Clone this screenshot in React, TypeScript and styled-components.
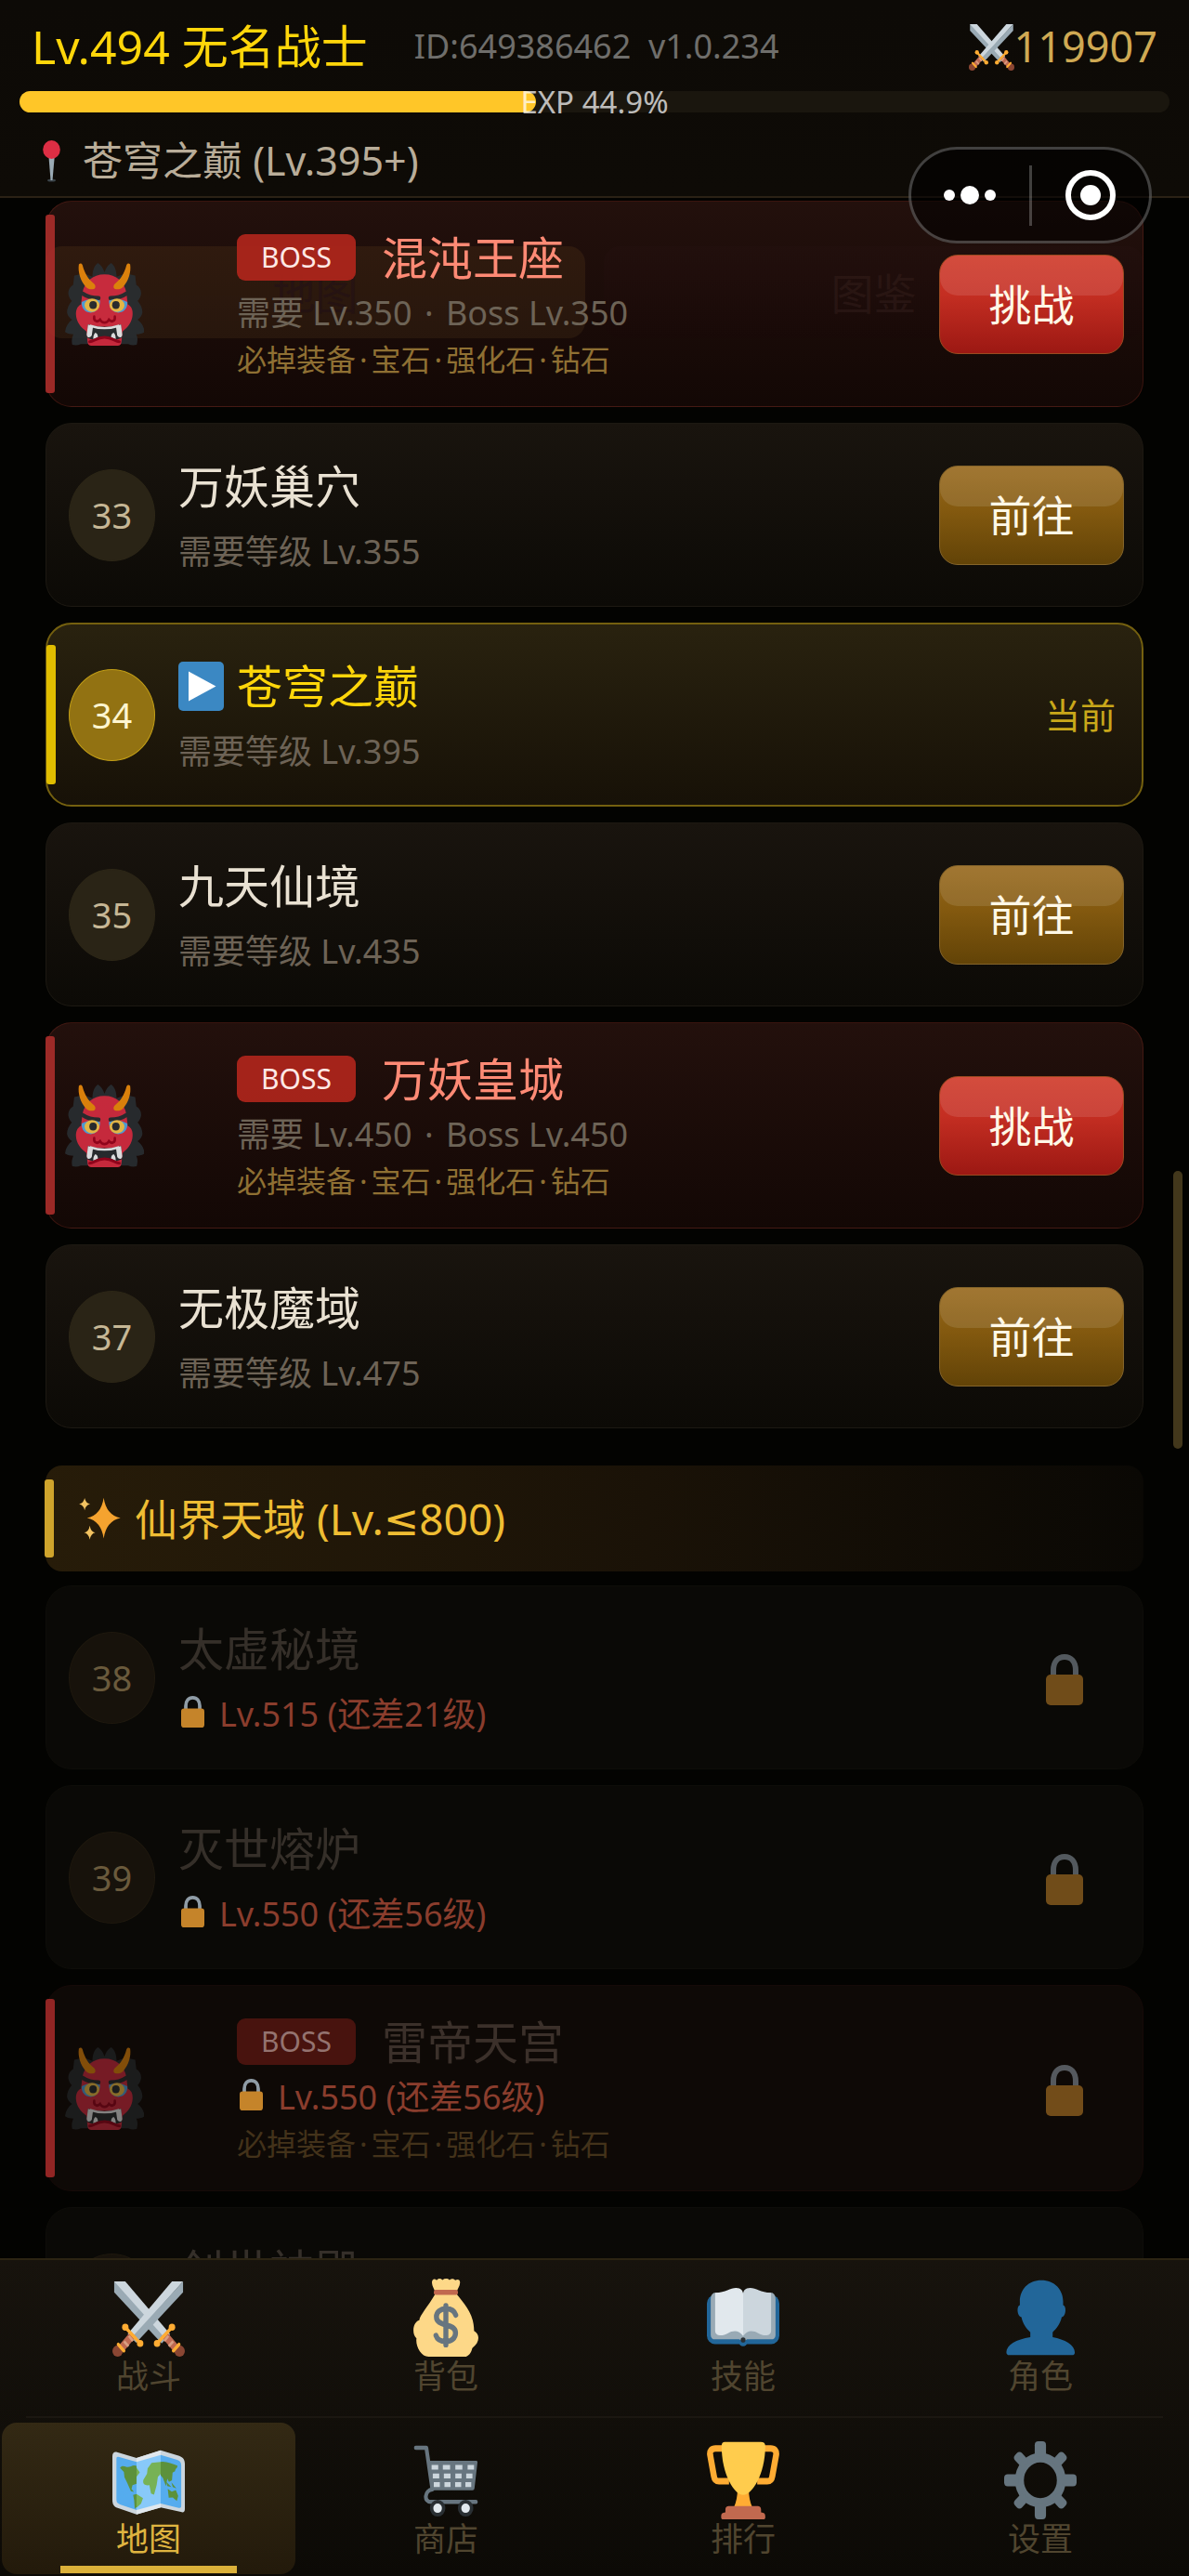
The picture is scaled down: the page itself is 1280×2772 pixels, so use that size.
import React from "react";
import styled, { createGlobalStyle, css } from "styled-components";

const GlobalStyle = createGlobalStyle`
  *, *::before, *::after { box-sizing: border-box; }
  body {
    margin: 0;
    background: #030301;
    font-family: "Noto Sans", "DejaVu Sans", "Noto Sans CJK SC", sans-serif;
  }
  button { font-family: inherit; cursor: pointer; }
  h1, h2, h3, p, ul { margin: 0; padding: 0; font-weight: 400; }
  ul { list-style: none; }
`;

/* ---------- layout ---------- */

const Screen = styled.div`
  position: relative;
  display: flex;
  flex-direction: column;
  height: 100vh;
  overflow: hidden;
`;

const Header = styled.header`
  padding: 20px 21px 8px;
  background: linear-gradient(#0d0a06, #0e0b06);
  border-bottom: 2px solid #2b2115;
`;

const PlayerRow = styled.div`
  display: flex;
  align-items: center;
  height: 60px;
  padding: 0 13px;
`;

const PlayerName = styled.h1`
  font-size: 50px;
  line-height: 60px;
  color: #ffd60a;
`;

const PlayerMeta = styled.p`
  flex: 1;
  padding-left: 50px;
  font-size: 36px;
  line-height: 60px;
  color: #6f6e6b;
  white-space: pre;
`;

const Power = styled.div`
  display: flex;
  align-items: center;
  font-size: 45px;
  line-height: 60px;
  color: #cfa953;
`;

const ExpTrack = styled.div`
  position: relative;
  height: 23px;
  margin-top: 18px;
  border-radius: 12px;
  background: #1a160e;
`;

const ExpFill = styled.div`
  height: 100%;
  border-radius: 12px;
  background: #ffc628;
`;

const ExpLabel = styled.span`
  position: absolute;
  inset: 0;
  display: flex;
  align-items: center;
  justify-content: center;
  font-size: 33px;
  color: rgba(255, 255, 255, 0.72);
`;

const Location = styled.div`
  display: flex;
  align-items: center;
  gap: 24px;
  height: 60px;
  margin-top: 22px;
  padding-left: 25px;
  font-size: 43px;
  line-height: 60px;
  color: #b9ad99;
`;

const Capsule = styled.div`
  position: absolute;
  top: 158px;
  right: 40px;
  z-index: 3;
  display: flex;
  align-items: center;
  width: 262px;
  height: 104px;
  border: 3px solid rgba(255, 255, 255, 0.24);
  border-radius: 52px;
  background: rgba(0, 0, 0, 0.55);
`;

const CapsuleButton = styled.button`
  display: flex;
  flex: 1;
  align-items: center;
  justify-content: center;
  height: 100%;
  padding: 0;
  border: 0;
  background: none;
`;

const CapsuleDivider = styled.span`
  width: 3px;
  height: 65px;
  background: rgba(255, 255, 255, 0.24);
`;

const ListArea = styled.main`
  position: relative;
  flex: 1;
  min-height: 0;
  overflow: hidden;
  padding: 3px 49px 0;
`;

const ScrollThumb = styled.span`
  position: absolute;
  top: 1047px;
  right: 7px;
  width: 10px;
  height: 299px;
  border-radius: 5px;
  background: #42371b;
`;

const SubTabs = styled.div`
  position: absolute;
  top: 52px;
  left: 49px;
  right: 49px;
  display: flex;
  gap: 20px;
`;

const SubTab = styled.button<{ $on?: boolean }>`
  flex: 1;
  height: 99px;
  padding: 0 0 4px;
  border: 0;
  border-radius: 18px;
  font-size: 46px;
  background: ${(p) => (p.$on ? "linear-gradient(#161106, #151106)" : "linear-gradient(#060403, #030201)")};
  color: ${(p) => (p.$on ? "#0f0b0b" : "#130e0c")};
`;

/* ---------- cards ---------- */

const Stages = styled.ul`
  position: relative;
  display: flex;
  flex-direction: column;
  gap: 17px;
`;

type Tone = "open" | "current" | "boss";

const tones = {
  open: css`
    height: 198px;
    border: 1px solid #1d1912;
    background: linear-gradient(#19140e, #0c0a06);
  `,
  current: css`
    height: 198px;
    border: 2px solid #74600f;
    background: linear-gradient(#29220f, #171107);
  `,
  boss: css`
    height: 222px;
    border: 1px solid rgba(150, 50, 38, 0.3);
    background: linear-gradient(rgba(175, 75, 65, 0.19), rgba(120, 40, 35, 0.14));
  `,
};

const Card = styled.li<{ $tone: Tone; $locked?: boolean }>`
  position: relative;
  display: flex;
  flex-shrink: 0;
  align-items: center;
  padding: 0 20px 0 ${(p) => (p.$tone === "current" ? 23 : 24)}px;
  border-radius: 28px;
  ${(p) => tones[p.$tone]}
  ${(p) =>
    p.$locked &&
    css`
      border-color: ${p.$tone === "boss" ? "#160a08" : "#0e0d09"};
      background: ${p.$tone === "boss" ? "#0e0906" : "#0a0906"};
    `}
`;

const Accent = styled.span<{ $color: string; $inset: number }>`
  position: absolute;
  top: ${(p) => p.$inset}px;
  bottom: ${(p) => p.$inset}px;
  left: -1px;
  width: 10px;
  border-radius: 3px;
  background: ${(p) => p.$color};
`;

const Badge = styled.span<{ $current?: boolean; $locked?: boolean }>`
  display: flex;
  flex-shrink: 0;
  align-items: center;
  justify-content: center;
  width: 93px;
  height: 99px;
  border: 1px solid ${(p) => (p.$current ? "#c19d16" : p.$locked ? "#1e180e" : "#2c2617")};
  border-radius: 50%;
  font-size: 38px;
  background: ${(p) => (p.$current ? "#927212" : p.$locked ? "#17120b" : "#2a2416")};
  color: ${(p) => (p.$current ? "#fff6d0" : p.$locked ? "#6a5a3c" : "#c6b795")};
`;

const BossFace = styled.span<{ $locked?: boolean }>`
  display: flex;
  flex-shrink: 0;
  width: 185px;
  margin-left: -4px;
  opacity: ${(p) => (p.$locked ? 0.5 : 0.88)};
`;

const Info = styled.div<{ $boss?: boolean }>`
  flex: 1;
  min-width: 0;
  padding-top: 4px;
  padding-left: ${(p) => (p.$boss ? 0 : 25)}px;
`;

const Title = styled.h2<{ $color: string; $boss?: boolean }>`
  display: flex;
  align-items: center;
  gap: ${(p) => (p.$boss ? 28 : 14)}px;
  height: ${(p) => (p.$boss ? 62 : 70)}px;
  font-size: 49px;
  line-height: 62px;
  color: ${(p) => p.$color};
`;

const BossTag = styled.span<{ $locked?: boolean }>`
  width: 128px;
  border-radius: 9px;
  font-size: 30px;
  line-height: 50px;
  text-align: center;
  background: ${(p) => (p.$locked ? "#48130e" : "rgba(178, 38, 28, 0.9)")};
  color: ${(p) => (p.$locked ? "#947370" : "#ffe9e6")};
`;

const Note = styled.p<{ $locked?: boolean; $boss?: boolean }>`
  display: flex;
  align-items: center;
  gap: 16px;
  height: ${(p) => (p.$boss ? 52 : 66)}px;
  padding-left: ${(p) => (p.$locked ? 3 : 0)}px;
  font-size: 36px;
  color: ${(p) => (p.$locked ? "#8a3d2d" : "#6d6356")};
`;

const Drops = styled.p<{ $locked?: boolean }>`
  margin-top: 2px;
  font-size: 32px;
  line-height: 50px;
  color: ${(p) => (p.$locked ? "#43321a" : "#8f7033")};
`;

const Dot = styled.span`
  padding: 0 4px;
`;

const GoButton = styled.button<{ $danger?: boolean }>`
  position: relative;
  flex-shrink: 0;
  width: 199px;
  height: 107px;
  padding: 0 0 4px;
  border: 1px solid ${(p) => (p.$danger ? "#9a4a20" : "#84642a")};
  border-radius: 20px;
  font-size: 46px;
  color: #fff8e6;
  background: ${(p) =>
    p.$danger ? "linear-gradient(#cf3626, #c42e22 40%, #9c1813)" : "linear-gradient(#966619, #83590f 45%, #624307)"};

  &::before {
    content: "";
    position: absolute;
    inset: 0 0 auto;
    height: 43px;
    border-radius: 19px;
    background: rgba(255, 255, 255, 0.11);
  }
`;

const CurrentTag = styled.span`
  padding: 0 8px 4px 0;
  font-size: 38px;
  color: #c9a71a;
`;

const LockSlot = styled.span`
  display: flex;
  padding: 4px 44px 0 0;
  opacity: 0.55;
`;

const Realm = styled.li`
  position: relative;
  display: flex;
  flex-shrink: 0;
  align-items: center;
  gap: 15px;
  height: 114px;
  margin: 23px 0 -2px;
  padding-left: 36px;
  border-radius: 18px;
  background: linear-gradient(90deg, #271c09, #1a1207 55%, #0a0804);
`;

const RealmTitle = styled.h3`
  font-size: 46px;
  line-height: 60px;
  color: #efbd33;
`;

/* ---------- bottom navigation ---------- */

const Nav = styled.nav`
  display: flex;
  flex-direction: column;
  border-top: 2px solid #2c2413;
  padding-bottom: 2px;
  background: linear-gradient(#17130d, #0c0a06);
`;

const NavRow = styled.div`
  display: grid;
  grid-template-columns: repeat(4, 1fr);
`;

const NavRule = styled.hr`
  height: 2px;
  margin: 5px 28px;
  border: 0;
  background: #1b1711;
`;

const NavItem = styled.button<{ $on?: boolean }>`
  position: relative;
  display: flex;
  flex-direction: column;
  align-items: center;
  height: 163px;
  margin: 0 2px;
  padding: 20px 0 0;
  border: 0;
  border-radius: 16px;
  font-size: 35px;
  line-height: 42px;
  background: ${(p) => (p.$on ? "linear-gradient(#332914, #231a0b)" : "none")};
  color: ${(p) => (p.$on ? "#dfb440" : "#50452f")};

  &::after {
    content: "";
    position: absolute;
    bottom: 1px;
    left: 20%;
    right: 20%;
    height: 8px;
    background: ${(p) => (p.$on ? "#dcb13a" : "transparent")};
  }
`;

/* ---------- drawings ---------- */

type Box = { w: number; h: number; children: React.ReactNode; box?: string };

const Pic = ({ w, h, children, box = "0 0 36 36" }: Box) => (
  <svg width={w} height={h} viewBox={box} preserveAspectRatio="none" aria-hidden="true">
    {children}
  </svg>
);

const SwordHilt = () => (
  <g strokeLinecap="round">
    <path d="M4 32.6 10.4 25.6" stroke="#BF6952" strokeWidth="3.6" strokeLinecap="butt" />
    <path d="M5.8 28.9 8 31.2M8.2 26.4 10.2 28.8" stroke="#D99E82" strokeWidth="1.2" strokeLinecap="butt" />
    <ellipse cx="2.6" cy="33.4" rx="2.6" ry="2.6" fill="#8A4633" />
    <path d="M2.9 30.3 5.7 33.3" stroke="#FFAC33" strokeWidth="1.5" />
    <path d="M6.4 22.4 13.8 29.9" stroke="#FFAC33" strokeWidth="1.6" />
    <circle cx="6.4" cy="22.4" r="1.6" fill="#FFAC33" />
    <circle cx="13.8" cy="29.9" r="1.6" fill="#FFAC33" />
  </g>
);

const Swords = ({ w = 78, h = 84 }) => (
  <Pic w={w} h={h}>
    <path fill="#9AAAB4" d="M.9 1.3h2.6l25 24.6-4 4L.9 6.3z" />
    <path fill="#CCD6DD" d="M.9 1.3h5.5L28.6 25.5l-2.2 2.2z" />
    <path fill="#CCD6DD" d="M35.1 1.3h-5.5L7.6 25.5l2.2 2.2z" />
    <path fill="#9AAAB4" d="M35.1 1.3v5L11.8 29.6l-2.4-2.3z" />
    <SwordHilt />
    <g transform="matrix(-1 0 0 1 36 0)">
      <SwordHilt />
    </g>
  </Pic>
);

const MoneyBag = () => (
  <Pic w={78} h={84}>
    <path
      fill="#FDD888"
      d="M12.8 7C9 13 5 17 4.8 19.2 1.6 20 .9 25.5 3.4 27.5 2.8 31 5.6 36 9.4 36h17.9c2 0 3.4-2 3.8-4C35 29.500 35 25.500 32 24.100 32 16 27 11.500 23.200 7z"
    />
    <path
      fill="#FDD888"
      d="M11.100 2c-.2-1.800 1.400-2.300 2.300-1.200.8-1 2-1 2.900-.2 1.100-.8 2.500-.8 3.500 0 1-.8 2.200-.7 2.900.2 1.200-.9 2.500-.3 2.300 1.200-.1 1.500-1.100 2.500-1.400 3.500H12.400c-.3-1-1.200-2-1.300-3.500z"
    />
    <rect x="12" y="5.100" width="12" height="2.400" rx="1" fill="#C1694F" />
    <path
      d="M18 12.500v18M22.900 16.800c-.6-2-2.600-2.900-4.900-2.900-2.600 0-4.700 1.400-4.700 3.700 0 5 9.500 2.500 9.500 7.500 0 2.400-2.200 3.900-4.800 3.900-2.400 0-4.300-1-4.900-2.700"
      fill="none"
      stroke="#67757F"
      strokeWidth="2.500"
      strokeLinecap="round"
    />
  </Pic>
);

const Book = () => (
  <Pic w={78} h={84}>
    <rect x="0" y="7.500" width="36" height="22.700" rx="4" fill="#226699" />
    <circle cx="18" cy="29" r="2.200" fill="#226699" />
    <path fill="#99AAB5" d="M3.500 6.500h29c1.200.6 1.600 1.500 1.600 3V26c0 1.400-.9 2-2 2H20l-2 1-2-1H4c-1.200 0-2.100-.6-2.100-2V9.500c0-1.500.4-2.400 1.600-3z" />
    <circle cx="18" cy="28.300" r="1.200" fill="#292F33" />
    <path fill="#E1E8ED" d="M4.100 6.500C9.500 6.500 11.500 4.300 14.500 4.300 17 4.300 18 5.500 18 7.500V26.500C16 23.600 13 23.800 10.500 25.200 7.500 26.800 4.100 26.500 4.100 24z" />
    <path fill="#CCD6DD" d="M31.900 6.500c-5.400 0-7.400-2.200-10.400-2.200-2.500 0-3.500 1.200-3.500 3.200v19c2-2.900 5-2.700 7.500-1.300 3 1.600 6.400 1.300 6.400-1.200z" />
  </Pic>
);

const Person = () => (
  <Pic w={78} h={84}>
    <path
      fill="#226699"
      d="M18.500.7C12 .7 7.800 5 7.800 10.500v1.700c-1.700.4-1.500 5.300.8 5.600.7 3.200 2.400 5.200 4.400 6.900V27C6 28 1.100 30.500 1.100 34q0 1.200.8 1.200h32.300q.9 0 .9-1.200c0-3.500-5-6-11-7v-2.300c2-1.700 3.700-3.700 4.500-6.900 2.200-.4 2.500-5.200.7-5.600v-1.700C29.300 5 25 .7 18.500.7z"
    />
  </Pic>
);

const WorldMap = () => (
  <Pic w={78} h={84}>
    <path
      fill="#CCD6DD"
      d="M2.300 5 12 7.700 24 4.200l9.200 2.500C35.200 7.400 36 8.500 36 10.500v20.800c0 1.300-.7 1.700-2 1.300L24 30.500l-12 3.300-9.400-3C.6 30.100 0 29 0 27V7c0-1.500.8-2.300 2.300-2z"
    />
    <path fill="#E1E8ED" d="m12 7.700 12-3.500v26.300l-12 3.300z" />
    <path fill="#55ACEE" d="M3 7.200 12 9.500v22.200l-8.300-2.600C2.300 28.600 2 28 2 26.500V8q0-1.100 1-.8zM24 6.300l8.200 2.300c1.500.5 2 1.300 2 2.700v18.400c0 1-.4 1.200-1.300 1L24 28.700z" />
    <path fill="#88C9F9" d="m12 9.500 12-3.200v22.400l-12 3z" />
    <path
      fill="#5C913B"
      d="M3.800 12.300c.8-1.200 2-.8 3-.5 2 .6 3.200-1.300 5.200-.4v8.200l-2 .6-.5 1.800 1.200 1.400-1.500-.4-1.800-3.700-1.400-2.700-.3-2.500zM10.300 24.800l1.700-.5v6l-.9.900-.3-4zM24 9.500c3-.3 5.500.8 8.300 1.800.2 1-1 1.300-1.200 2.500l-1.200.7-.3 3.500-1.500.8-.8-1.600-.7 3.500-1.500-3.800L24 15.800zM27.500 22l2 1.300 2-.8 1.200 2.700-.7 2.300-2-1.600-2 .1zM26.800 18.800l2.500 2.300-2-.4zM29.300 19l2.500 2.800-1.800-.7z"
    />
    <path
      fill="#77B255"
      d="m12 12.200 1.600 2.200-1.600 2zM12 24.300l3.200 2-1 2.500-2.200 1.800zM24 9.500v5.600l-1.400 1.300-.6 3.700-1.300 4.500-1.500-.5-.8-3.800c-2.300.3-3.500-.6-3-2.500l1.800-2.800.3-2.500 2-2.500z"
    />
  </Pic>
);

const Cart = () => (
  <Pic w={78} h={84}>
    <path
      fill="none"
      stroke="#67757F"
      strokeWidth="1.900"
      strokeLinecap="round"
      strokeLinejoin="round"
      d="M3.100 3h5.200l3 19.200c-3.800.4-4.600 5.800-.6 5.800h22.200"
    />
    <path fill="#67757F" d="M9.300 9.600c0-.4.300-.6.700-.6h23q.8 0 .7.800l-1.500 12q-.1.800-1 .8H11.400z" />
    <path
      stroke="#CCD6DD"
      strokeWidth="2.200"
      d="M10.900 12h3.300M16.500 12h3.600M22.700 12h3.500M28.800 12h3.200M11.500 16h3.200M17 16h3.300M22.700 16h3.100M28.100 16h3.100M12 20h3M17.300 20h3M22.600 20h3M27.700 20h2.900"
    />
    <ellipse cx="13.900" cy="30.900" rx="3" ry="3" fill="#E1E8ED" stroke="#292F33" strokeWidth="1.700" />
    <ellipse cx="27.800" cy="30.900" rx="3" ry="3" fill="#E1E8ED" stroke="#292F33" strokeWidth="1.700" />
  </Pic>
);

const Trophy = () => (
  <Pic w={78} h={84}>
    <path
      fill="none"
      stroke="#FFAC33"
      strokeWidth="3"
      d="M8.500 3.300H4.300c-1.800 0-3 1-2.700 3l1.900 9.800c.3 1.700 1 2.300 2.500 2.300h5M27.500 3.300h4.200c1.800 0 3 1 2.700 3l-1.900 9.800c-.3 1.700-1 2.300-2.500 2.300h-5"
    />
    <path fill="#FFAC33" d="M15.200 22h5.600c0 3.500.6 6 1.800 8.500h-9.200c1.200-2.500 1.800-5 1.800-8.500z" />
    <path fill="#FFCC4D" d="M9.300.3h17.400c1.600 0 2.300.6 2.300 1.900 0 12.800-6.500 22.500-11 22.500S7.300 15 7.300 2.200C7.300.9 7.800.3 9.300.3z" />
    <path fill="#C1694F" d="M9.200 32.800v-1.300c0-1.100.7-1.600 1.600-1.600h14.500c.9 0 1.600.5 1.600 1.600v1.300c1.600.1 2.100.8 2.100 1.700v.6c0 .6-.3.900-1 .9H8.100c-.7 0-1-.3-1-.9v-.6c0-.9.500-1.600 2.100-1.700z" />
  </Pic>
);

const Gear = () => (
  <Pic w={78} h={84}>
    <circle cx="18" cy="18" r="10.400" fill="none" stroke="#66757F" strokeWidth="4.400" />
    {[0, 90, 180, 270].map((a) => (
      <rect key={a} x="15.200" y="0" width="5.600" height="7.200" rx="1.800" fill="#66757F" transform={`rotate(${a} 18 18)`} />
    ))}
    {[45, 135, 225, 315].map((a) => (
      <rect key={a} x="15.600" y=".9" width="4.800" height="7" rx="1.800" fill="#66757F" transform={`rotate(${a} 18 18)`} />
    ))}
  </Pic>
);

const Oni = () => (
  <Pic w={85} h={89}>
    <path
      fill="#292F33"
      d="M12.500 6c0-3 1-5 2.500-6 1.600 1 2.400 2.300 3 4 .6-1.700 1.400-3 3-4 1.500 1 2.500 3 2.500 6l4-1.500 4.500 1 .5 4c1.600 1 2.300 2.200 2.200 4-.3 1.400-.8 2.200-1.600 3 1.400 1.700 2.200 3.200 2.200 5-.3 1.500-1 2.400-2.200 3.200 1.800 1.300 2.900 3 3.200 5.300-1.200.8-2.500 1-3.800 1 .8 1.600.6 3 .2 4.600-1.300.3-2.600.3-3.900-.3H7.200c-1.300.6-2.600.6-3.900.3-.4-1.600-.2-3 .5-4.600-1.300 0-2.600-.2-3.800-1 .3-2.300 1.400-4 3.200-5.300C2 23.900 1.200 23 .9 21.500c0-1.800.8-3.300 2.200-5-.8-.8-1.300-1.600-1.600-3 0-1.800.6-3 2.200-4l.5-4 4.500-1z"
    />
    <path
      fill="#DD2E44"
      d="M18 5c5.500 0 9 3.300 10 8l.6 5c1.700.8 2.400 2.500 2.200 4.600-.2 3-2 5.400-4.600 7.200l-.5 4.700c-.1 1-.7 1.500-1.700 1.500H12c-1 0-1.600-.5-1.700-1.500l-.5-4.700C7 28 5.200 25.600 5 22.600c-.1-2.100.6-3.800 2.300-4.600l.6-5C9 8.300 12.500 5 18 5z"
    />
    <path fill="#F4900C" d="M6.300.6C7 0 7.600.2 8 1c1 3.500 2.500 6 5.200 8 .8.600.9 2 0 2.300-1.200.4-2.700.1-3.600-.8C7 7.700 5.800 4 6.300.6zM29.700.6C29 0 28.400.2 28 1c-1 3.500-2.500 6-5.200 8-.8.600-.9 2 0 2.300 1.200.4 2.700.1 3.600-.8C29 7.700 30.200 4 29.700.6z" />
    <path fill="none" stroke="#292F33" strokeWidth="1.800" strokeLinecap="round" d="M8 13.300c2.300 1.500 4.500 2 7.300 2M28 13.300c-2.300 1.500-4.500 2-7.300 2" />
    <path fill="#55ACEE" d="M7.600 17c2.500-1.300 5.400-1.600 8.400-.6-.1 3-1.700 5.200-4.300 5.200-2.600-.1-4.300-1.900-4.100-4.600zM28.400 17c-2.500-1.300-5.400-1.600-8.400-.6.1 3 1.700 5.200 4.300 5.200 2.600-.1 4.300-1.900 4.100-4.600z" />
    <ellipse cx="12.300" cy="18.400" rx="3.400" ry="2.900" fill="#FFCC4D" />
    <ellipse cx="23.700" cy="18.400" rx="3.400" ry="2.900" fill="#FFCC4D" />
    <circle cx="12.800" cy="18.300" r="1.700" fill="#292F33" />
    <circle cx="23.200" cy="18.300" r="1.700" fill="#292F33" />
    <path fill="none" stroke="#A0041E" strokeWidth="1.100" strokeLinecap="round" d="M13.300 23.300c-.3 2 1.400 2.700 2.700 1.400.9 1.600 3.100 1.600 4 0 1.300 1.300 3 .6 2.700-1.400" />
    <path fill="#292F33" d="M10.500 26.700c5 1.400 10 1.400 15 0l.6 5.800c-1.300.4-2 .9-3 .9-3-1.600-7.200-1.600-10.200 0-1 0-1.700-.5-3-.9z" />
    <path fill="none" stroke="#F5F8FA" strokeWidth="1" d="M11.300 27.300c4.400 1.400 9 1.400 13.400 0" />
    <path fill="#F5F8FA" d="m10.500 26.800 2.300.6-.6 4.200c-.8 1.200-2.300.9-2.300-.5zM25.500 26.800l-2.300.6.600 4.200c.8 1.200 2.300.9 2.300-.5zM13.800 30.300c.9.300 1.200 1 1.200 2l-2.100.9c-.1-1.200.2-2.200.9-2.900zM22.200 30.300c-.9.300-1.200 1-1.200 2l2.100.9c.1-1.200-.2-2.200-.9-2.900z" />
    <path fill="none" stroke="#A0041E" strokeWidth="1.200" strokeLinecap="round" d="M11.200 34.300c2-.1 3.300-1.900 6.800-1.900s4.800 1.800 6.800 1.900" />
  </Pic>
);

const Lock = ({ w, h }: { w: number; h: number }) => (
  <Pic w={w} h={h} box="0 0 40 55">
    <path fill="none" stroke="#8f9ca6" strokeWidth="6" d="M8 25V17.500C8 8 13 3 20 3s12 5 12 14.500V25" />
    <rect y="22" width="40" height="33" rx="5" fill="#c5842a" />
  </Pic>
);

const Pin = () => (
  <Pic w={19} h={45} box="0 0 19 45">
    <ellipse cx="9.500" cy="43" rx="4.500" ry="1.600" fill="#3a4348" />
    <path fill="#9AAAB4" d="M6.500 18h6.200L10.500 43h-2z" />
    <ellipse cx="9.500" cy="10" rx="9.300" ry="10" fill="#DD2E44" />
  </Pic>
);

const Sparkles = () => (
  <Pic w={45} h={46}>
    <path fill="#F5A32F" d="M21.300.5q2.200 14.500 14.500 17.100-12.300 2.600-14.500 17.200-2.200-14.600-14.300-17.200 12.100-2.600 14.300-17.100z" />
    <path fill="#F3C361" d="M4.900.8q.9 4.300 4.700 5.100-3.800.8-4.700 5.200Q4 6.700.1 5.900 4 5.100 4.900.8zM9.300 24q.9 5.200 4.700 6-3.800.8-4.700 5.900-.9-5.100-4.800-5.900 3.900-.8 4.800-6z" />
  </Pic>
);

const Play = () => (
  <Pic w={49} h={53} box="0 0 49 53">
    <rect width="49" height="53" rx="5" fill="#3B88C3" />
    <path fill="#fff" d="M11 10.500 40.500 26.500 11 42.500z" />
  </Pic>
);

const Dots = () => (
  <Pic w={56} h={22} box="0 0 56 22">
    <circle cx="6" cy="11" r="6" fill="#fff" />
    <circle cx="28" cy="11" r="10" fill="#fff" />
    <circle cx="50" cy="11" r="6" fill="#fff" />
  </Pic>
);

const Target = () => (
  <Pic w={54} h={54} box="0 0 54 54">
    <circle cx="27" cy="27" r="24" fill="none" stroke="#fff" strokeWidth="6" />
    <circle cx="27" cy="27" r="11" fill="#fff" />
  </Pic>
);

/* ---------- stage list ---------- */

type StageProps = { no: number; name: string; level: number; gap?: number; current?: boolean };

const Stage = ({ no, name, level, gap, current }: StageProps) => {
  const locked = gap !== undefined;
  return (
    <Card $tone={current ? "current" : "open"} $locked={locked}>
      {current && <Accent $color="#e0bd00" $inset={22} />}
      <Badge $current={current} $locked={locked}>{no}</Badge>
      <Info>
        <Title $color={current ? "#ffd60a" : locked ? "#352f29" : "#e9e1d2"}>
          {current && <Play />}
          {name}
        </Title>
        {locked ? (
          <Note $locked>
            <Lock w={25} h={34} />
            Lv.{level} (还差{gap}级)
          </Note>
        ) : (
          <Note>需要等级 Lv.{level}</Note>
        )}
      </Info>
      {locked ? (
        <LockSlot><Lock w={40} h={55} /></LockSlot>
      ) : current ? (
        <CurrentTag>当前</CurrentTag>
      ) : (
        <GoButton type="button">前往</GoButton>
      )}
    </Card>
  );
};

type BossProps = { name: string; level: number; gap?: number };

const drops = ["必掉装备", "宝石", "强化石", "钻石"];

const Boss = ({ name, level, gap }: BossProps) => {
  const locked = gap !== undefined;
  return (
    <Card $tone="boss" $locked={locked}>
      <Accent $color={locked ? "#922524" : "rgba(178, 46, 44, 0.86)"} $inset={14} />
      <BossFace $locked={locked}><Oni /></BossFace>
      <Info $boss>
        <Title $boss $color={locked ? "#3b302a" : "#ff8a75"}>
          <BossTag $locked={locked}>BOSS</BossTag>
          {name}
        </Title>
        {locked ? (
          <Note $boss $locked>
            <Lock w={25} h={34} />
            Lv.{level} (还差{gap}级)
          </Note>
        ) : (
          <Note $boss>
            <span>需要 Lv.{level} <Dot>·</Dot> Boss Lv.{level}</span>
          </Note>
        )}
        <Drops $locked={locked}>
          {drops.map((drop, i) => (
            <React.Fragment key={drop}>
              {i > 0 && <Dot>·</Dot>}
              {drop}
            </React.Fragment>
          ))}
        </Drops>
      </Info>
      {locked ? (
        <LockSlot><Lock w={40} h={55} /></LockSlot>
      ) : (
        <GoButton type="button" $danger>挑战</GoButton>
      )}
    </Card>
  );
};

const navRows = [
  [
    { label: "战斗", icon: <Swords /> },
    { label: "背包", icon: <MoneyBag /> },
    { label: "技能", icon: <Book /> },
    { label: "角色", icon: <Person /> },
  ],
  [
    { label: "地图", icon: <WorldMap />, on: true },
    { label: "商店", icon: <Cart /> },
    { label: "排行", icon: <Trophy /> },
    { label: "设置", icon: <Gear /> },
  ],
];

export default function App() {
  const exp = 44.9;
  return (
    <>
      <GlobalStyle />
      <Screen>
        <Header>
          <PlayerRow>
            <PlayerName>Lv.494 无名战士</PlayerName>
            <PlayerMeta>{"ID:649386462  v1.0.234"}</PlayerMeta>
            <Power>
              <Swords w={49} h={52} />
              119907
            </Power>
          </PlayerRow>
          <ExpTrack role="progressbar" aria-valuenow={exp} aria-valuemin={0} aria-valuemax={100} aria-label="EXP">
            <ExpFill style={{ width: `${exp}%` }} />
            <ExpLabel>EXP {exp}%</ExpLabel>
          </ExpTrack>
          <Location>
            <Pin />
            苍穹之巅 (Lv.395+)
          </Location>
        </Header>

        <Capsule>
          <CapsuleButton type="button" aria-label="更多"><Dots /></CapsuleButton>
          <CapsuleDivider />
          <CapsuleButton type="button" aria-label="关闭"><Target /></CapsuleButton>
        </Capsule>

        <ListArea>
          <SubTabs>
            <SubTab type="button" $on>地图</SubTab>
            <SubTab type="button">图鉴</SubTab>
          </SubTabs>
          <Stages>
            <Boss name="混沌王座" level={350} />
            <Stage no={33} name="万妖巢穴" level={355} />
            <Stage no={34} name="苍穹之巅" level={395} current />
            <Stage no={35} name="九天仙境" level={435} />
            <Boss name="万妖皇城" level={450} />
            <Stage no={37} name="无极魔域" level={475} />
            <Realm>
              <Accent $color="#cfa42c" $inset={15} />
              <Sparkles />
              <RealmTitle>仙界天域 (Lv.≤800)</RealmTitle>
            </Realm>
            <Stage no={38} name="太虚秘境" level={515} gap={21} />
            <Stage no={39} name="灭世熔炉" level={550} gap={56} />
            <Boss name="雷帝天宫" level={550} gap={56} />
            <Stage no={41} name="创世神殿" level={600} gap={106} />
          </Stages>
          <ScrollThumb />
        </ListArea>

        <Nav>
          {navRows.map((row, i) => (
            <React.Fragment key={i}>
              {i > 0 && <NavRule />}
              <NavRow>
                {row.map((item) => (
                  <NavItem key={item.label} type="button" $on={"on" in item}>
                    {item.icon}
                    {item.label}
                  </NavItem>
                ))}
              </NavRow>
            </React.Fragment>
          ))}
        </Nav>
      </Screen>
    </>
  );
}
